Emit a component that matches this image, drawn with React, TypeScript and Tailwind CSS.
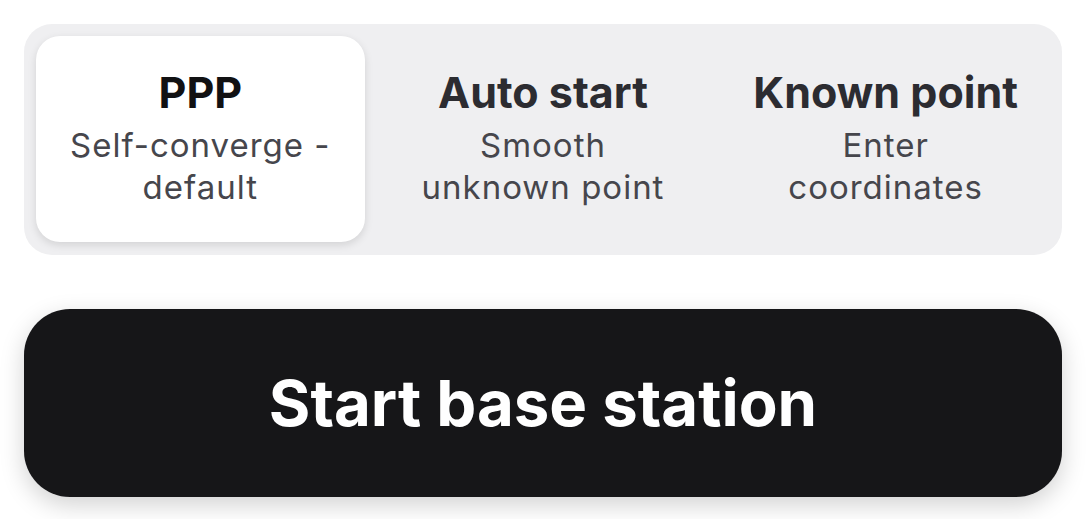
const MODES = [
  { id: 'ppp', title: 'PPP', sub: ['Self-converge -', 'default'] },
  { id: 'auto', title: 'Auto start', sub: ['Smooth', 'unknown point'] },
  { id: 'known', title: 'Known point', sub: ['Enter', 'coordinates'] },
]

export default function App() {
  const active = 'ppp'

  return (
    <div className="min-h-screen bg-white px-[24px] pt-[24px] font-['Inter','Noto_Sans',sans-serif]">
      {/* mode picker */}
      <div className="grid grid-cols-3 gap-[14px] rounded-[28px] bg-[#efeff1] p-[12px] pb-[13px]">
        {MODES.map((m) => (
          <button
            key={m.id}
            className={`flex h-[206px] flex-col items-center justify-center rounded-[24px] pb-[3px] text-center
              ${m.id === active ? 'bg-white shadow-[0_3px_8px_rgba(0,0,0,0.12)]' : ''}`}
          >
            <span className={`text-[43px] font-bold leading-[50px] ${m.id === active ? 'text-[#111113]' : 'text-[#2c2c31]'}`}>
              {m.title}
            </span>
            <span className="mt-[7px] text-[33px] leading-[42px] tracking-[1px] text-[#46464c]">
              {m.sub[0]}
              <br />
              {m.sub[1]}
            </span>
          </button>
        ))}
      </div>

      <button className="mt-[54px] flex h-[188px] w-full items-center justify-center rounded-[46px] bg-[#161618] text-[63.5px] font-bold text-white shadow-[0_8px_24px_rgba(0,0,0,0.18)]">
        Start base station
      </button>
    </div>
  )
}
